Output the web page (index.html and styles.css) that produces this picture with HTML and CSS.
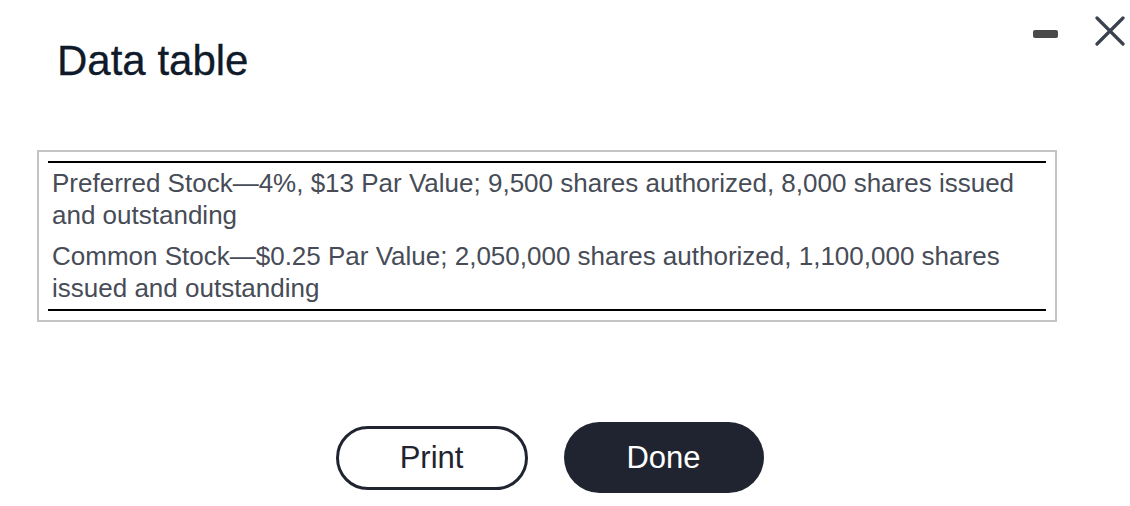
FILE: index.html
```html
<!DOCTYPE html>
<html>
<head>
<meta charset="utf-8">
<link rel="stylesheet" href="styles.css">
</head>
<body>
<div class="dialog">
  <div class="window-controls">
    <span class="minimize"></span>
    <svg class="close" width="30" height="30" viewBox="0 0 30 30"><path d="M2 2 L28 28 M28 2 L2 28" stroke="#3a4250" stroke-width="3.2" stroke-linecap="round" fill="none"/></svg>
  </div>
  <h1 class="title">Data table</h1>
  <div class="table-box">
    <table class="data">
      <tr><td>Preferred Stock—4%, $13 Par Value; 9,500 shares authorized, 8,000 shares issued and outstanding</td></tr>
      <tr><td>Common Stock—$0.25 Par Value; 2,050,000 shares authorized, 1,100,000 shares issued and outstanding</td></tr>
    </table>
  </div>
  <div class="actions">
    <button class="btn btn-outline">Print</button>
    <button class="btn btn-solid">Done</button>
  </div>
</div>
</body>
</html>
```
FILE: styles.css
```css
html, body { margin: 0; padding: 0; background: #fff; }
body { font-family: "Liberation Sans", Arial, sans-serif; width: 1130px; height: 506px; overflow: hidden; }
.dialog { position: relative; width: 1130px; height: 506px; }
.window-controls { position: absolute; top: 16px; right: 5px; display: flex; align-items: center; gap: 37px; }
.minimize { display: block; width: 25px; height: 8px; border-radius: 2px; background: #4a4a4a; margin-top: 5px; }
.close { display: block; }
.title { margin: 0; padding: 38px 0 0 57px; font-size: 42px; font-weight: normal; color: #0f1a2a; line-height: 46px; letter-spacing: 0; -webkit-text-stroke: 0.3px #0f1a2a; }
.table-box { margin: 66px 0 0 37px; width: 998px; border: 2px solid #c4c4c4; padding: 9px 9px 9px 9px; box-sizing: content-box; }
.data { width: 100%; border-collapse: collapse; border-top: 2px solid #000; border-bottom: 2px solid #000; }
.data td { padding: 4px 0 5px 4px; font-size: 26px; line-height: 32px; color: #474c57; }
.actions { display: flex; justify-content: center; gap: 36px; margin-top: 100px; padding-right: 31px; align-items: center; }
.btn { font-family: "Liberation Sans", Arial, sans-serif; font-size: 31px; border-radius: 40px; cursor: pointer; }
.btn-outline { width: 192px; height: 64px; background: #fff; color: #1f2430; border: 3px solid #1f2430; }
.btn-solid { width: 200px; height: 71px; background: #1f2430; color: #fff; border: none; }
```
